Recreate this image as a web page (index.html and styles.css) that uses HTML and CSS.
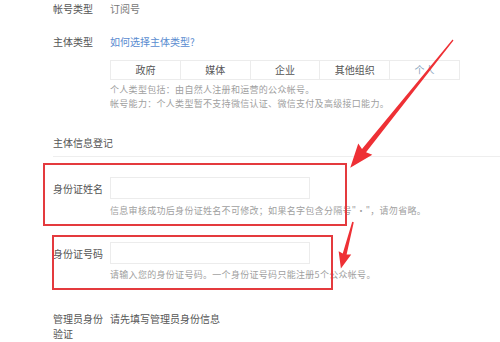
FILE: index.html
```html
<!DOCTYPE html>
<html lang="zh-CN">
<head>
<meta charset="UTF-8">
<title>注册信息</title>
<link rel="stylesheet" href="styles.css">
</head>
<body>
<div class="form">
  <div class="row">
    <span class="label">帐号类型</span>
    <span class="value">订阅号</span>
  </div>
  <div class="row row-type">
    <span class="label">主体类型</span>
    <a class="link" href="#">如何选择主体类型?</a>
  </div>
  <div class="field">
    <div class="tabs">
      <span class="tab">政府</span>
      <span class="tab">媒体</span>
      <span class="tab">企业</span>
      <span class="tab">其他组织</span>
      <span class="tab tab-active">个人</span>
    </div>
    <p class="hint hint-first">个人类型包括：由自然人注册和运营的公众帐号。</p>
    <p class="hint">帐号能力：个人类型暂不支持微信认证、微信支付及高级接口能力。</p>
  </div>

  <div class="section-title">主体信息登记</div>

  <div class="row row-input row-name">
    <span class="label">身份证姓名</span>
    <input class="input" type="text">
  </div>
  <p class="hint field hint-input">信息审核成功后身份证姓名不可修改；如果名字包含分隔号"·"，请勿省略。</p>

  <div class="row row-input row-id">
    <span class="label">身份证号码</span>
    <input class="input" type="text">
  </div>
  <p class="hint field hint-input">请输入您的身份证号码。一个身份证号码只能注册5个公众帐号。</p>

  <div class="row row-admin">
    <span class="label">管理员身份验证</span>
    <span class="value value-dark">请先填写管理员身份信息</span>
  </div>
</div>

<svg class="marks" width="500" height="342" viewBox="0 0 500 342">
  <rect x="44" y="164" width="302" height="61" fill="none" stroke="#e43a3e" stroke-width="2"/>
  <rect x="53" y="236" width="279" height="53" fill="none" stroke="#e43a3e" stroke-width="2"/>
  <!-- arrows drawn along +x then rotated into place -->
  <g transform="translate(453,40) rotate(128.8)" fill="#ee3035">
    <polygon points="0,-0.6 142,-2.6 140,-9 164,0 140,9 142,2.6 0,0.6"/>
  </g>
  <g transform="translate(353,222) rotate(104.6)" fill="#ee3035">
    <polygon points="0,-0.8 33,-2 32,-6.5 48,0 32,6.5 33,2 0,0.8"/>
  </g>
</svg>
</body>
</html>
```

FILE: styles.css
```css
body {
  margin: 0;
  background: #fff;
  font-family: "Noto Sans CJK SC", "Noto Sans", sans-serif;
  font-size: 10px;
  color: #555;
}

.form {
  padding-left: 53px;
}

.row {
  display: flex;
  align-items: center;
  line-height: 18px;
}

.label {
  width: 57px;
  flex: none;
  color: #555;
}

.value {
  color: #777;
}

.value-dark {
  color: #555;
}

.row-type {
  margin-top: 15px;
}

.link {
  color: #5a8bd0;
  text-decoration: none;
}

.field {
  margin-left: 57px;
}

.tabs {
  display: flex;
  width: 350px;
  margin-top: 9px;
  border: 1px solid #ececec;
  box-sizing: border-box;
  height: 20px;
}

.tab {
  flex: 1;
  text-align: center;
  line-height: 18px;
  color: #555;
  border-left: 1px solid #ececec;
}

.tab:first-child {
  border-left: none;
}

.tab-active {
  color: #8aa6c0;
}

.hint {
  margin-top: 0;
  margin-bottom: 0;
  font-size: 9px;
  letter-spacing: 0.3px;
  line-height: 14px;
  color: #a0a0a0;
}

.hint-first {
  margin-top: 3px;
}

.section-title {
  margin-top: 23px;
  padding-bottom: 4px;
  line-height: 18px;
  color: #555;
  border-bottom: 1px solid #eee;
}

.row-input {
  line-height: 21px;
}

.row-name {
  margin-top: 20px;
}

.row-id {
  margin-top: 24px;
}

.input {
  width: 200px;
  height: 22px;
  box-sizing: border-box;
  margin: 0;
  border: 1px solid #ececec;
  outline: none;
}

.hint-input {
  margin-top: 5px;
}

.row-id + .hint-input {
  margin-top: 4px;
}

.row-admin {
  margin-top: 29px;
  align-items: flex-start;
  line-height: 15px;
}

.row-admin .label {
  width: 52px;
  margin-right: 5px;
}

.marks {
  position: absolute;
  left: 0;
  top: 0;
  pointer-events: none;
}
```
